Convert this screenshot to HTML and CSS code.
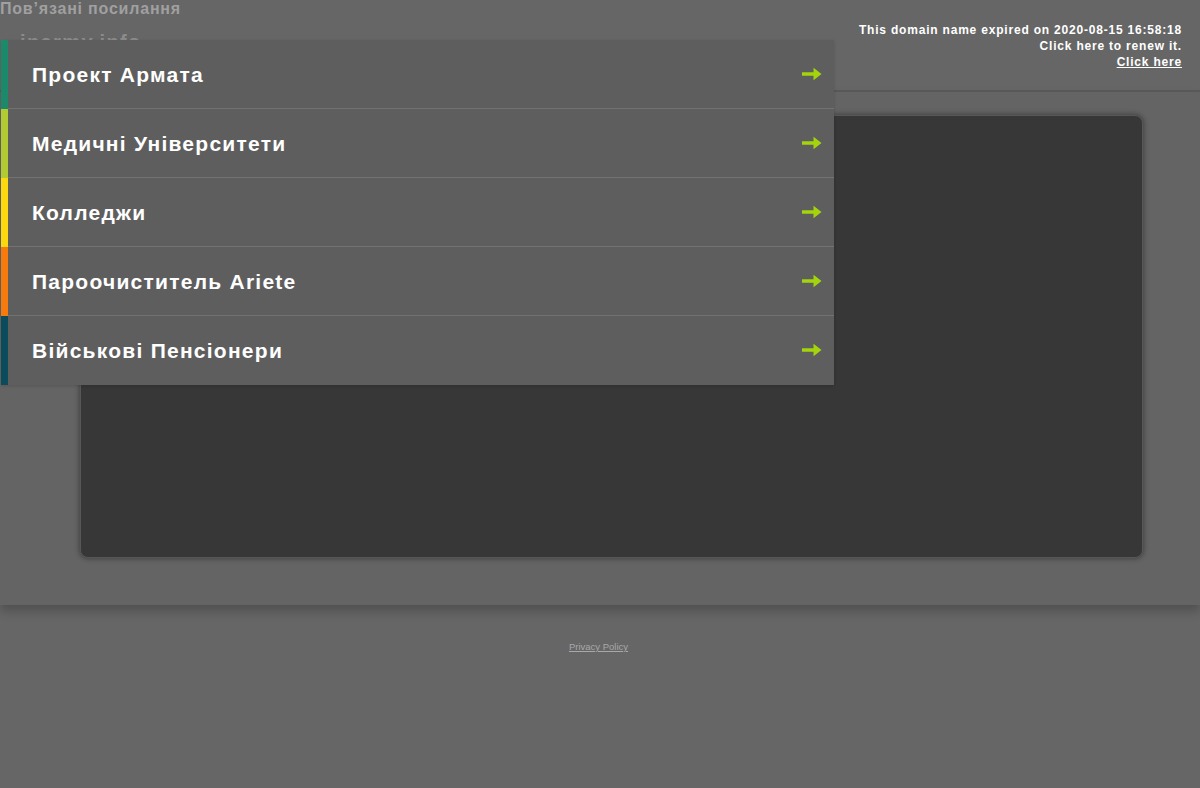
FILE: index.html
```html
<!DOCTYPE html>
<html lang="uk">
<head>
<meta charset="utf-8">
<title>inarmy.info</title>
<link rel="stylesheet" href="styles.css">
</head>
<body>
<div class="page">
  <header class="header">
    <div class="brand">
      <div class="related">Пов’язані посилання</div>
      <div class="domain">inarmy.info</div>
    </div>
    <div class="notice">
      <div>This domain name expired on 2020-08-15 16:58:18</div>
      <div>Click here to renew it.</div>
      <div><a href="#" class="notice-link">Click here</a></div>
    </div>
  </header>
  <main class="main">
    <div class="panel"></div>
  </main>
  <footer class="footer">
    <a href="#" class="privacy">Privacy Policy</a>
  </footer>
</div>

<nav class="menu">
  <a class="item c1" href="#"><span class="bar"></span><span class="body"><span class="label">Проект Армата</span><svg class="arrow" viewBox="0 0 20 14" width="20" height="14"><path d="M0 5.2h11.5V0.8L19.5 7l-8 6.2V8.8H0z" fill="#a3d40c"/></svg></span></a>
  <a class="item c2" href="#"><span class="bar"></span><span class="body"><span class="label">Медичні Університети</span><svg class="arrow" viewBox="0 0 20 14" width="20" height="14"><path d="M0 5.2h11.5V0.8L19.5 7l-8 6.2V8.8H0z" fill="#a3d40c"/></svg></span></a>
  <a class="item c3" href="#"><span class="bar"></span><span class="body"><span class="label">Колледжи</span><svg class="arrow" viewBox="0 0 20 14" width="20" height="14"><path d="M0 5.2h11.5V0.8L19.5 7l-8 6.2V8.8H0z" fill="#a3d40c"/></svg></span></a>
  <a class="item c4" href="#"><span class="bar"></span><span class="body"><span class="label">Пароочиститель Ariete</span><svg class="arrow" viewBox="0 0 20 14" width="20" height="14"><path d="M0 5.2h11.5V0.8L19.5 7l-8 6.2V8.8H0z" fill="#a3d40c"/></svg></span></a>
  <a class="item c5" href="#"><span class="bar"></span><span class="body last"><span class="label">Військові Пенсіонери</span><svg class="arrow" viewBox="0 0 20 14" width="20" height="14"><path d="M0 5.2h11.5V0.8L19.5 7l-8 6.2V8.8H0z" fill="#a3d40c"/></svg></span></a>
</nav>
</body>
</html>
```

FILE: styles.css
```css
* { box-sizing: border-box; }
html, body {
  margin: 0;
  padding: 0;
  background: #666666;
  font-family: "Liberation Sans", Arial, sans-serif;
}
.page {
  min-height: 788px;
}
.header {
  height: 92px;
  display: flex;
  justify-content: space-between;
  border-bottom: 2px solid #5a5a5a;
  background: #666666;
}
.related {
  color: #a0a0a0;
  font-weight: bold;
  font-size: 16px;
  letter-spacing: 0.8px;
  line-height: 18px;
}
.domain {
  color: #8c8c8c;
  font-weight: bold;
  font-size: 20px;
  letter-spacing: 1.4px;
  margin: 12px 0 0 20px;
  line-height: 24px;
}
.notice {
  padding: 22px 18px 0 0;
  text-align: right;
  color: #ffffff;
  font-weight: bold;
  font-size: 12px;
  letter-spacing: 0.8px;
  line-height: 16px;
}
.notice-link {
  color: #ffffff;
  text-decoration: underline;
}
.main {
  background: #646464;
  height: 513px;
  padding: 23px 57px 0 80px;
  box-shadow: 0 6px 10px rgba(0, 0, 0, 0.22);
}
.panel {
  height: 443px;
  background: #373737;
  border: 1px solid #575757;
  border-radius: 8px;
  box-shadow: 0 0 5px 1px rgba(0, 0, 0, 0.35);
}
.footer {
  text-align: center;
  padding-top: 31px;
}
.privacy {
  color: #a8a8a8;
  font-size: 9.5px;
  text-decoration: underline;
  margin-left: -3px;
}
.menu {
  position: absolute;
  left: 1px;
  top: 40px;
  width: 833px;
  background: #5e5e5e;
  box-shadow: 0 1px 3px rgba(0, 0, 0, 0.15);
}
.item {
  display: flex;
  height: 69px;
  text-decoration: none;
}
.bar {
  width: 7px;
  flex: none;
}
.c1 .bar { background: #1a8a6a; }
.c2 .bar { background: #b3cb32; }
.c3 .bar { background: #fbd90e; }
.c4 .bar { background: #f77b0c; }
.c5 .bar { background: #0b4b5b; }
.body {
  flex: 1;
  display: flex;
  align-items: center;
  justify-content: space-between;
  padding: 0 12px 0 24px;
  border-bottom: 1px solid #727272;
}
.body.last {
  border-bottom: none;
}
.label {
  color: #ffffff;
  font-weight: bold;
  font-size: 21px;
  letter-spacing: 1.25px;
  line-height: 24px;
  padding-top: 1px;
}
.arrow {
  display: block;
  margin-bottom: 1px;
}
```
